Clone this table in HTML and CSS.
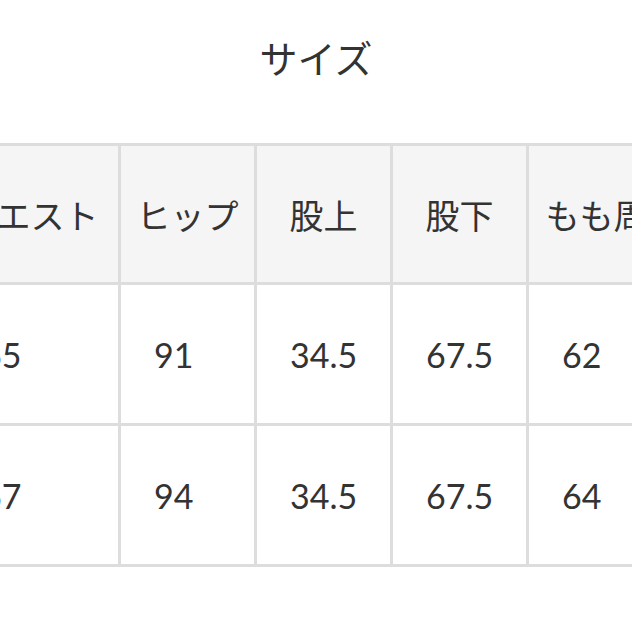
FILE: index.html
```
<!DOCTYPE html>
<html lang="ja">
<head>
<meta charset="utf-8">
<link rel="stylesheet" href="styles.css">
</head>
<body>
<h2 class="title">サイズ</h2>
<div class="table-wrap">
<table class="size-table">
<colgroup>
<col class="c-first"><col class="c"><col class="c"><col class="c"><col class="c-last">
</colgroup>
<thead>
<tr><th>ウエスト</th><th>ヒップ</th><th>股上</th><th>股下</th><th>もも周り</th></tr>
</thead>
<tbody>
<tr><td>65</td><td>91</td><td>34.5</td><td>67.5</td><td>62</td></tr>
<tr><td>67</td><td>94</td><td>34.5</td><td>67.5</td><td>64</td></tr>
</tbody>
</table>
</div>
</body>
</html>
```
FILE: styles.css
```
html, body {
  margin: 0;
  padding: 0;
  background: #ffffff;
}
body {
  width: 632px;
  height: 632px;
  overflow: hidden;
  font-family: Lato, "Noto Sans CJK JP", sans-serif;
  color: #333333;
}
.title {
  margin: 28px 0 58px;
  font-size: 38px;
  line-height: 57px;
  font-weight: 400;
  text-align: center;
  font-family: "Noto Sans CJK JP", sans-serif;
}
.table-wrap {
  overflow: hidden;
  width: 632px;
}
.size-table {
  margin-left: -60px;
  border-collapse: collapse;
  table-layout: fixed;
  width: 758px;
}
.c-first { width: 178px; }
.c { width: 136px; }
.c-last { width: 172px; }
.size-table th,
.size-table td {
  border: 3px solid #dddddd;
  font-size: 34px;
  font-weight: 400;
  vertical-align: middle;
  white-space: nowrap;
  overflow: visible;
}
.size-table th {
  background: #f5f5f5;
  height: 136px;
  text-align: center;
  padding: 0;
  font-family: "Noto Sans CJK JP", sans-serif;
}
.size-table td {
  background: #ffffff;
  height: 138px;
  text-align: left;
  padding: 0 0 0 33px;
}
.size-table td:first-child {
  padding-left: 39px;
}
```
